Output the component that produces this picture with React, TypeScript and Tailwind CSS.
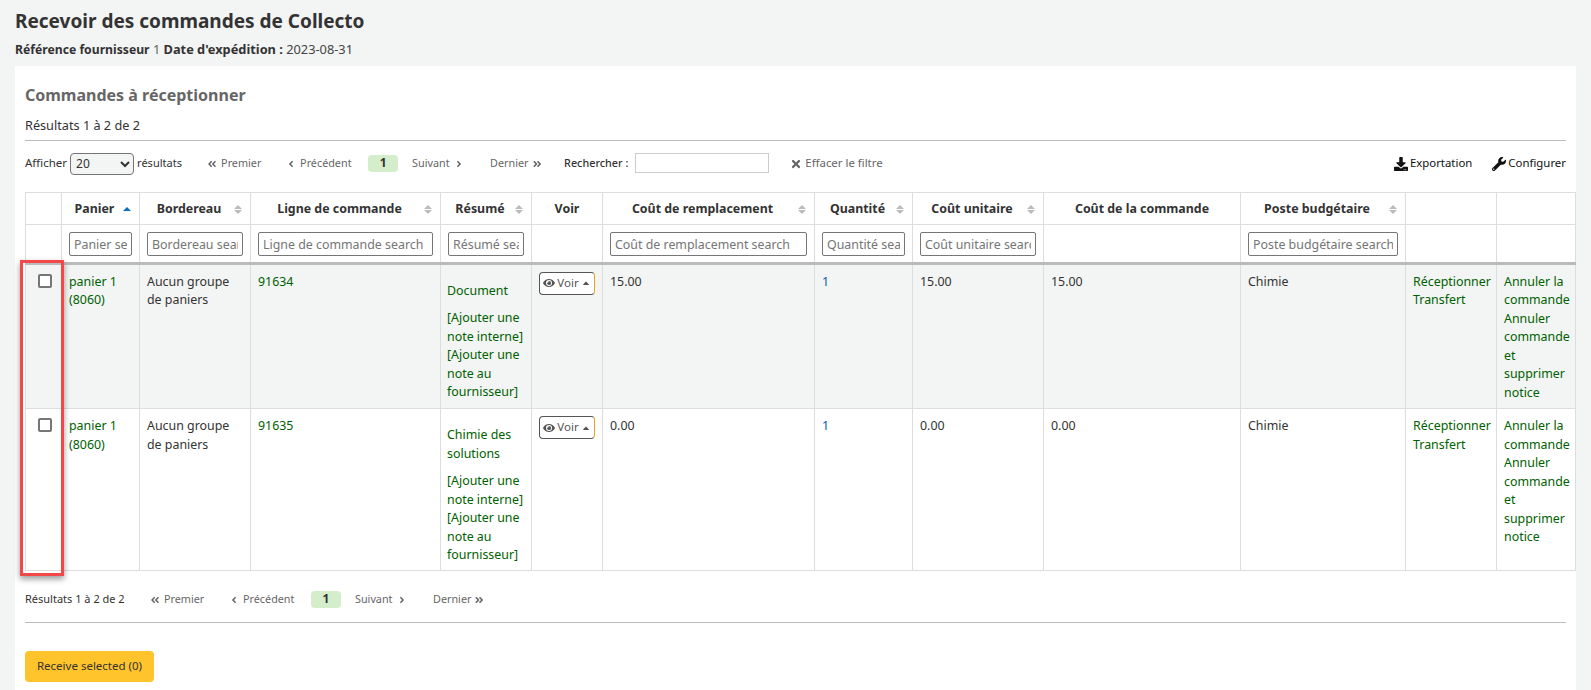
import { FaEye, FaDownload, FaWrench, FaTimes, FaAngleDoubleLeft, FaAngleDoubleRight, FaAngleLeft, FaAngleRight, FaCaretUp } from "react-icons/fa";

const link = "text-[#006100]";

function Sort({ active }: { active?: boolean }) {
  return (
    <span className="absolute right-[8px] top-[11px] flex h-[11px] w-[8px] flex-col items-center justify-center">
      {active ? (
        <span className="h-0 w-0 border-x-[4px] border-b-[4px] border-x-transparent border-b-[#0a6cc4]" />
      ) : (
        <>
          <span className="mb-[1px] h-0 w-0 border-x-[4px] border-b-[4px] border-x-transparent border-b-[#bbbbbb]" />
          <span className="h-0 w-0 border-x-[4px] border-t-[4px] border-x-transparent border-t-[#bbbbbb]" />
        </>
      )}
    </span>
  );
}

function Pager() {
  const item = "flex items-center gap-[4px] text-[10.8px] text-[#666666]";
  return (
    <div className="flex items-center">
      <span className={`${item} w-[79px]`}><FaAngleDoubleLeft className="text-[10px]" />Premier</span>
      <span className={`${item} w-[82px]`}><FaAngleLeft className="text-[10px]" />Précédent</span>
      <span className="flex h-[17px] w-[30px] items-center justify-center rounded-[4px] bg-[#d4eecb] text-[12px] font-bold text-[#333333]">1</span>
      <span className={`${item} ml-[14px] w-[78px]`}>Suivant<FaAngleRight className="text-[10px]" /></span>
      <span className={`${item} w-[51px]`}>Dernier<FaAngleDoubleRight className="text-[10px]" /></span>
    </div>
  );
}

function Row({ ref1, summary, price, tall }: { ref1: string; summary: string; price: string; tall?: boolean }) {
  const td = "border border-[#dddddd] px-[7px] pt-[8px] pb-[6px] align-top";
  return (
    <tr className={tall ? "bg-[#f3f4f4]" : "bg-white"}>
      <td className={`${td} pl-[12px]`}>
        <input type="checkbox" className="mt-[1px] block h-[14px] w-[14px] appearance-none rounded-[2px] border-2 border-[#767676] bg-white" />
      </td>
      <td className={`${td} ${link}`}>panier 1 (8060)</td>
      <td className={td}>Aucun groupe de paniers</td>
      <td className={`${td} ${link}`}>{ref1}</td>
      <td className={`${td} ${link} pl-[6px] pr-[2px]`}>
        <p className="my-[9px]">{summary}</p>
        <p>[Ajouter une note interne]</p>
        <p className="-mb-[1px]">[Ajouter une note au fournisseur]</p>
      </td>
      <td className={td}>
        <button className="-mt-[1px] flex h-[23px] w-[56px] items-center justify-center gap-[2px] rounded-[4px] border border-[#555555] border-r-[#e8a317] bg-white text-[11.5px] text-[#555555]">
          <FaEye className="text-[12px]" />Voir<FaCaretUp className="text-[10px]" />
        </button>
      </td>
      <td className={td}>{price}</td>
      <td className={`${td} text-[#0a5ca8]`}>1</td>
      <td className={td}>{price}</td>
      <td className={td}>{price}</td>
      <td className={td}>Chimie</td>
      <td className={`${td} ${link}`}><div>Réceptionner</div><div>Transfert</div></td>
      <td className={`${td} ${link}`}><div>Annuler la commande</div><div>Annuler commande et supprimer notice</div></td>
    </tr>
  );
}

const headers: [string, boolean, boolean][] = [
  ["", false, false],
  ["Panier", true, true],
  ["Bordereau", true, false],
  ["Ligne de commande", true, false],
  ["Résumé", true, false],
  ["Voir", false, false],
  ["Coût de remplacement", true, false],
  ["Quantité", true, false],
  ["Coût unitaire", true, false],
  ["Coût de la commande", false, false],
  ["Poste budgétaire", true, false],
  ["", false, false],
  ["", false, false],
];

const filters = ["", "Panier search", "Bordereau search", "Ligne de commande search", "Résumé search", "", "Coût de remplacement search", "Quantité search", "Coût unitaire search", "", "Poste budgétaire search", "", ""];

export default function App() {
  return (
    <div className="h-[690px] overflow-hidden bg-[#f3f4f4] font-['Noto_Sans',sans-serif] text-[12.4px] leading-[18.5px] text-[#333333]">
      <div className="px-[15px]">
        <h1 className="pt-[8px] text-[19px] font-bold leading-[27px]">Recevoir des commandes de Collecto</h1>
        <div className="mt-[5px] text-[12.8px]">
          <b className="text-[12.2px]">Référence fournisseur</b> <span className="text-[#666666]">1</span> <b>Date d'expédition :</b> <span className="text-[#444444]">2023-08-31</span>
        </div>
      </div>

      <div className="mx-[15px] mt-[6.5px] h-[640px] bg-white px-[10px] pt-[18px]">
        <h2 className="text-[16px] font-bold leading-[23px] text-[#666666]">Commandes à réceptionner</h2>
        <div className="mt-[9px] text-[12.7px]">Résultats 1 à 2 de 2</div>
        <div className="mt-[5px] border-t border-[#bbbbbb]" />

        <div className="mt-[11px] flex h-[24px] items-center text-[11.4px]">
          <span className="mr-[3px] text-[11.5px]">Afficher</span>
          <select defaultValue="20" className="h-[22px] w-[64px] rounded-[4px] border border-[#767676] bg-[#f3f4f4] pl-[1px] text-[12px]">
            <option>20</option>
          </select>
          <span className="ml-[3px] w-[70px] text-[11px]">résultats</span>
          <Pager />
          <span className="ml-[23px] text-[10.8px] font-medium">Rechercher :</span>
          <input className="mb-[2px] ml-[7px] h-[20px] w-[134px] border border-[#cccccc] bg-white" />
          <span className="ml-[21px] flex items-center gap-[3px] text-[#666666]"><FaTimes className="text-[12px]" />Effacer le filtre</span>
          <span className="ml-auto flex items-center gap-[2px] text-[#111111]"><FaDownload className="text-[14px]" />Exportation</span>
          <span className="ml-[20px] flex items-center gap-[2px] text-[#111111]"><FaWrench className="text-[14px]" />Configurer</span>
        </div>

        <div className="relative mt-[16px]">
          <table className="w-[1550px] table-fixed border-collapse">
            <colgroup>
              <col className="w-[36px]" /><col className="w-[78px]" /><col className="w-[111px]" /><col className="w-[190px]" />
              <col className="w-[91px]" /><col className="w-[71px]" /><col className="w-[212px]" /><col className="w-[98px]" />
              <col className="w-[131px]" /><col className="w-[197px]" /><col className="w-[165px]" /><col className="w-[91px]" /><col className="w-[79px]" />
            </colgroup>
            <thead>
              <tr>
                {headers.map(([h, sort, active], i) => (
                  <th key={i} className={`relative h-[32px] border border-[#dddddd] pb-0 pt-[2px] pl-2 text-center font-bold ${sort ? "pr-5" : "pr-2"}`}>
                    {h}
                    {sort && <Sort active={active} />}
                  </th>
                ))}
              </tr>
              <tr>
                {filters.map((f, i) => (
                  <td key={i} className="h-[39px] border border-b-[3px] border-[#dddddd] border-b-[#bbbbbb] pb-0 pl-[7px] pr-[7px] pt-[2px]">
                    {f && <input placeholder={f} className="block h-[24px] w-full rounded-[2px] border border-[#767676] bg-white px-[4px] text-[12.4px] placeholder:text-[#757575]" />}
                  </td>
                ))}
              </tr>
            </thead>
            <tbody>
              <Row ref1="91634" summary="Document" price="15.00" tall />
              <Row ref1="91635" summary="Chimie des solutions" price="0.00" />
            </tbody>
          </table>
          <div className="pointer-events-none absolute left-[-5px] top-[68px] h-[316px] w-[44px] border-[3px] border-[#f44848] shadow-[0_3px_6px_rgba(0,0,0,0.4)]" />
        </div>

        <div className="mt-[19px] flex h-[20px] items-center">
          <span className="w-[125px] text-[11px]">Résultats 1 à 2 de 2</span>
          <Pager />
        </div>
        <div className="mt-[12px] border-t border-[#bbbbbb]" />
        <button className="mt-[28px] h-[31px] w-[129px] rounded-[4px] bg-[#ffc32b] text-[11.5px] text-[#333333]">Receive selected (0)</button>
      </div>
    </div>
  );
}
